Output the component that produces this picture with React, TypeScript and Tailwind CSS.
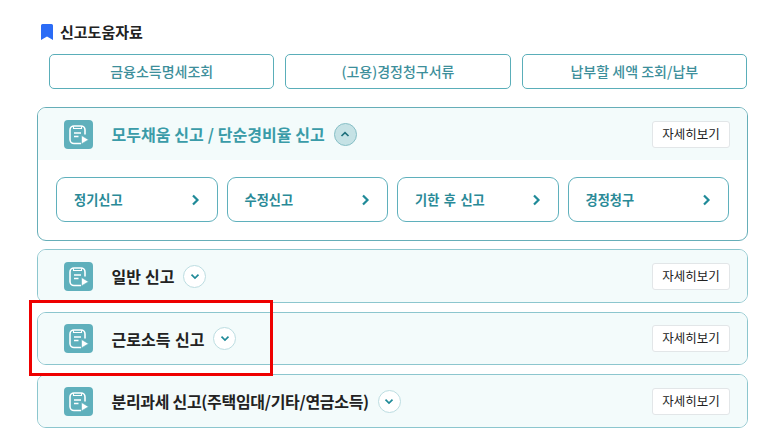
import React from "react";

function DocIcon() {
  return (
    <div className="w-[29px] h-[29px] rounded-[4px] bg-[#5fb0bc] shrink-0">
      <svg width="29" height="29" viewBox="0 0 29 29" fill="none" stroke="#ffffff" strokeWidth="1.6">
        <path d="M17 23.5H10a4 4 0 0 1-4-4V10a4 4 0 0 1 4-4h7a4 4 0 0 1 4 4v4.5" />
        <path d="M9.5 6.2v2.3h8V6.2" strokeWidth="1.1" />
        <path d="M10 13h7M10 16.5h4.5" strokeWidth="1.5" />
        <path d="M17.5 15.5l7 4.2-7 4.2z" fill="#ffffff" stroke="#5fb0bc" strokeWidth="0.6" />
      </svg>
    </div>
  );
}

function Toggle({ open }: { open?: boolean }) {
  return (
    <div
      className={
        "w-[23px] h-[23px] rounded-full border flex items-center justify-center shrink-0 " +
        (open ? "bg-[#c5e2e5] border-[#86bfc6]" : "bg-white border-[#bcdde1]")
      }
    >
      <svg width="10" height="7" viewBox="0 0 10 7" fill="none" stroke={open ? "#1f6f7b" : "#1f8a98"} strokeWidth="1.7">
        <path d={open ? "M1.5 5l3.5-3.3L8.5 5" : "M1.5 1.7L5 5l3.5-3.3"} />
      </svg>
    </div>
  );
}

function Detail() {
  return (
    <button className="ml-auto w-[78px] h-[27px] bg-white border border-[#e2e6e8] rounded-[3px] text-[12.5px] text-[#222] flex items-center justify-center">
      자세히보기
    </button>
  );
}

function Header({ title, open, titleClass }: { title: string; open?: boolean; titleClass: string }) {
  return (
    <div className={"flex items-center pl-[26px] pr-[17px] bg-[#f3fbfb] " + (open ? "h-[52px]" : "h-full")}>
      <DocIcon />
      <span className={"ml-[18.5px] text-[16px] font-bold " + titleClass + " " + (open ? "text-[#3a9ba8]" : "text-[#222]")}>
        {title}
      </span>
      <span className="ml-[9px]">
        <Toggle open={open} />
      </span>
      <Detail />
    </div>
  );
}

function TopButton({ label }: { label: string }) {
  return (
    <button className="h-[35px] border border-[#5aaeb9] rounded-[5px] bg-white text-[14px] font-medium text-[#3d8f9b] flex items-center justify-center">
      {label}
    </button>
  );
}

function SubButton({ label }: { label: string }) {
  return (
    <button className="h-[45px] border border-[#5fb0bc] rounded-[9px] bg-white text-[13.2px] font-bold text-[#2a8a97] [word-spacing:1.5px] flex items-center justify-between pl-[17px] pr-[17px]">
      <span>{label}</span>
      <svg width="9" height="12" viewBox="0 0 9 12" fill="none" stroke="#1f8a98" strokeWidth="2.2">
        <path d="M2 1.5L6.5 6 2 10.5" />
      </svg>
    </button>
  );
}

function ClosedCard({ title, heightClass, titleClass }: { title: string; heightClass: string; titleClass: string }) {
  return (
    <div className={"border border-[#8cc6ce] rounded-[9px] overflow-hidden " + heightClass}>
      <Header title={title} titleClass={titleClass} />
    </div>
  );
}

export default function App() {
  return (
    <div
      className="relative w-[763px] h-[443px] bg-white overflow-hidden pt-[23px] pl-[37px] pr-[15px]"
      style={{ fontFamily: '"Noto Sans CJK KR", "Noto Sans", sans-serif' }}
    >
      <div className="flex items-center h-[18px] pl-[4px]">
        <svg width="12" height="16" viewBox="0 0 12 16" className="shrink-0">
          <path d="M0 1.5A1.5 1.5 0 0 1 1.5 0h9A1.5 1.5 0 0 1 12 1.5V16L6 12.5 0 16z" fill="#2b6cf6" />
        </svg>
        <span className="ml-[7px] text-[15px] font-bold text-[#222]">신고도움자료</span>
      </div>

      <div className="grid grid-cols-3 gap-[11px] mt-[13px] ml-[12px] mr-[1px]">
        <TopButton label="금융소득명세조회" />
        <TopButton label="(고용)경정청구서류" />
        <TopButton label="납부할 세액 조회/납부" />
      </div>

      <div className="mt-[18px] h-[134px] border border-[#66aeb8] rounded-[9px] overflow-hidden">
        <Header title="모두채움 신고 / 단순경비율 신고" titleClass="[word-spacing:0.3px]" open />
        <div className="grid grid-cols-4 gap-[9px] mt-[17px] ml-[18px] mr-[18px]">
          <SubButton label="정기신고" />
          <SubButton label="수정신고" />
          <SubButton label="기한 후 신고" />
          <SubButton label="경정청구" />
        </div>
      </div>

      <div className="flex flex-col gap-[9px] mt-[8px]">
        <ClosedCard title="일반 신고" heightClass="h-[54px]" titleClass="[word-spacing:0.4px]" />
        <ClosedCard title="근로소득 신고" heightClass="h-[53px]" titleClass="[word-spacing:1px]" />
        <ClosedCard title="분리과세 신고(주택임대/기타/연금소득)" heightClass="h-[54px]" titleClass="tracking-[-0.3px]" />
      </div>

      <div className="absolute left-[29px] top-[300px] w-[244px] h-[76px] border-[3px] border-[#ee0000]" />
    </div>
  );
}
